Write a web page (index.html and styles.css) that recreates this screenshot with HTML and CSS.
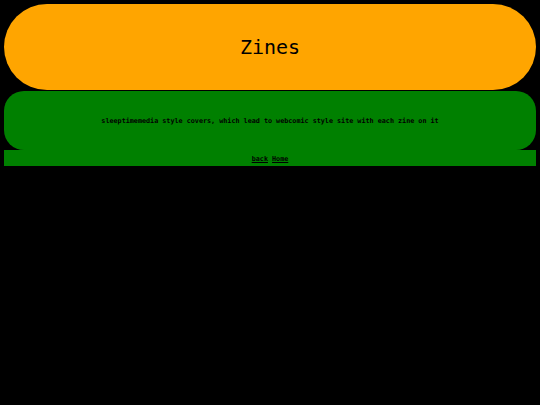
FILE: index.html
```html
<!DOCTYPE html>
<html>
<head>
<meta charset="utf-8">
<link rel="stylesheet" href="styles.css">
</head>
<body>
<header class="title-box"><h1 class="title">Zines</h1></header>
<section class="desc-box"><p class="desc">sleeptimemedia style covers, which lead to webcomic style site with each zine on it</p></section>
<nav class="nav"><a href="#" class="nav-link">back</a> <a href="#" class="nav-link">Home</a></nav>
</body>
</html>
```
FILE: styles.css
```css
html, body {
  background: #000;
}
body {
  margin: 4px;
  font-family: "DejaVu Sans Mono", monospace;
  color: #000;
}
.title-box {
  background: #ffa500;
  height: 86px;
  border-radius: 43px;
  display: flex;
  align-items: center;
  justify-content: center;
}
.title {
  margin: 0;
  font-size: 20px;
  font-weight: normal;
}
.desc-box {
  margin-top: 1px;
  background: #008000;
  height: 59px;
  border-radius: 20px;
  display: flex;
  align-items: center;
  justify-content: center;
}
.desc {
  margin: 0;
  font-size: 6.75px;
  font-weight: bold;
}
.nav {
  background: #008000;
  height: 16px;
  box-sizing: border-box;
  padding-top: 5px;
  line-height: 8px;
  text-align: center;
  font-size: 6.75px;
  font-weight: bold;
}
.nav-link {
  color: #000;
  text-decoration: underline;
}
```
